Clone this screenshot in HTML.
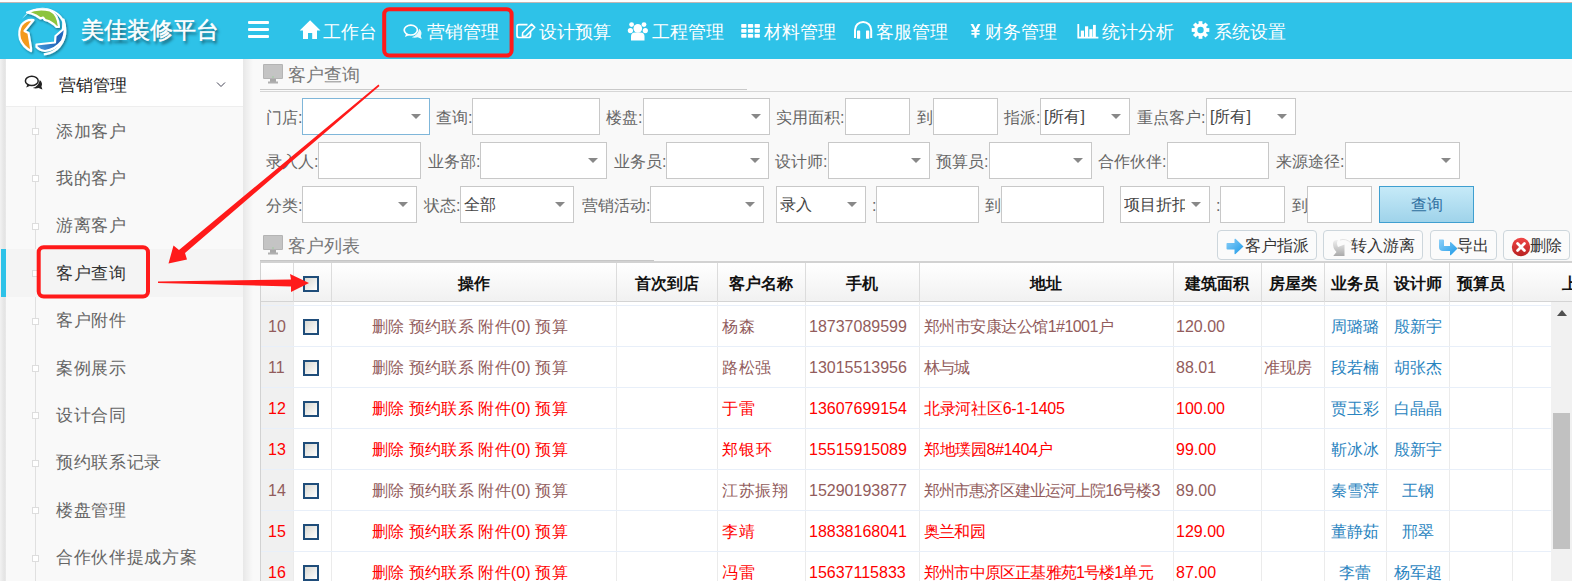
<!DOCTYPE html><html><head><meta charset="utf-8"><style>
*{box-sizing:border-box;margin:0;padding:0}
html,body{width:1572px;height:581px;overflow:hidden;background:#f9f9f9;font-family:"Liberation Sans",sans-serif;position:relative}
.abs{position:absolute}
#top{left:0;top:0;width:1572px;height:3px;background:linear-gradient(#fefefe 0,#fefefe 2px,#c2b6b4 2px)}
#hdr{left:0;top:3px;width:1572px;height:56px;background:#2ec2e8}
.nav{position:absolute;top:20.7px;color:#fff;font-size:18px;line-height:22px;white-space:nowrap}
.ni{position:absolute}
#side{left:6px;top:59px;width:237px;height:522px;background:#f9f9f9}
.si{position:absolute;left:56px;font-size:17px;letter-spacing:0.7px;color:#666;line-height:20px;white-space:nowrap}
.node{position:absolute;left:32px;width:7px;height:7px;border:1px solid #ddd;background:#fff}
#content{left:243px;top:59px;width:1329px;height:522px;background:#fafafa}
.lbl{position:absolute;font-size:16px;color:#666;line-height:20px;white-space:nowrap}
.inp{position:absolute;background:#fff;border:1px solid #c8c8c8}
.sel:after{content:"";position:absolute;right:8px;top:15px;border-left:5px solid transparent;border-right:5px solid transparent;border-top:5px solid #888}
.val{position:absolute;left:3px;top:8px;font-size:16px;color:#444;line-height:20px;white-space:nowrap}
.th{position:absolute;top:264px;height:39px;font-size:16px;font-weight:bold;color:#111;line-height:39px;text-align:center;white-space:nowrap}
.td{position:absolute;font-size:16px;line-height:20px;white-space:nowrap}
.vl{position:absolute;width:1px;background:#ebebeb}
.hl{position:absolute;height:1px;background:#e8eff9}
.cb{position:absolute;width:16px;height:16px;border:2px solid #1f4d7a;background:linear-gradient(135deg,#d8d8d2,#fff)}
.btn{position:absolute;top:230px;height:30px;border:1px solid #cdd6dc;border-radius:4px;background:#fbfbfb;font-size:16px;color:#333;line-height:29px;white-space:nowrap}
</style></head><body>
<div id="top" class="abs"></div><div id="hdr" class="abs"></div>
<svg class="abs" style="left:0;top:0" width="80" height="60" viewBox="0 0 80 60">
<defs><filter id="ls" x="-30%" y="-30%" width="160%" height="160%"><feDropShadow dx="1.2" dy="1.5" stdDeviation="1" flood-color="#000" flood-opacity=".4"/></filter>
<linearGradient id="bg1" x1="0" y1="1" x2="1" y2="0"><stop offset="0" stop-color="#4aa0e0"/><stop offset=".5" stop-color="#1f63b8"/><stop offset="1" stop-color="#2a70c8"/></linearGradient></defs>
<g filter="url(#ls)" stroke="#fff" stroke-width="2.2" stroke-linejoin="round">
<path d="M22.13 18.71 A24.6 24.6 0 0 1 63.10 18.70 A24.6 24.6 0 0 1 43.94 55.51 L43.74 53.22 A22.3 22.3 0 0 0 61.11 19.85 A22.3 22.3 0 0 0 27.89 13.19 Z" fill="#fff" stroke="none"/>
<path d="M33.5 20 Q26 19 21.5 25 Q18 31 20 39 Q23 47 31 51 L31 48 L28.5 33 L24.5 31 Z" fill="#f39a1c"/>
<path d="M27 12.5 Q38 7.5 50 10.5 Q58 14 59 27 L56.5 27 L54 24.5 L51 22.5 L48.5 21 L45 20 L43 17.5 L40.5 18.5 L36 15.5 Q31 13 27 12.5 Z" fill="#8cc43c"/>
<path d="M63.5 19.5 Q67 30 62 41 Q55 50 45 51 Q40 50.5 36.5 47 L36.5 44.5 L55 42.5 L55.5 36 L63 29.5 Z" fill="url(#bg1)"/>
</g></svg>
<div class="abs" style="left:81px;top:16px;font-size:23px;line-height:28px;color:#fff;-webkit-text-stroke:0.5px #fff;text-shadow:2px 3px 3px rgba(0,0,0,.55);white-space:nowrap">美佳装修平台</div>
<div class="abs" style="left:248px;top:21px;width:21px;height:3px;background:#fff;border-radius:1px"></div>
<div class="abs" style="left:248px;top:28px;width:21px;height:3px;background:#fff;border-radius:1px"></div>
<div class="abs" style="left:248px;top:35px;width:21px;height:3px;background:#fff;border-radius:1px"></div>
<div class="nav" style="left:323px">工作台</div>
<div class="nav" style="left:427px">营销管理</div>
<div class="nav" style="left:539px">设计预算</div>
<div class="nav" style="left:652px">工程管理</div>
<div class="nav" style="left:764px">材料管理</div>
<div class="nav" style="left:876px">客服管理</div>
<div class="nav" style="left:985px">财务管理</div>
<div class="nav" style="left:1102px">统计分析</div>
<div class="nav" style="left:1214px">系统设置</div>
<svg class="abs" style="left:0;top:0" width="1300" height="59" viewBox="0 0 1300 59"><g fill="#fff">
<path d="M310.1 20.2 L320.5 30.5 L317 30.5 L317 39 L312.2 39 L312.2 33 L308 33 L308 39 L303 39 L303 30.5 L299.7 30.5 Z"/>
<path d="M527.5 24.6 L519 24.6 Q517 24.6 517 26.6 L517 35.5 Q517 37.5 519 37.5 L528.5 37.5 Q530.5 37.5 530.5 35.5 L530.5 31.5" fill="none" stroke="#fff" stroke-width="1.7"/>
<path d="M531.5 24.2 L534.8 27.3 L526 36 L522.4 36.3 L522.7 32.8 Z" fill="none" stroke="#fff" stroke-width="1.6" stroke-linejoin="round"/>
<circle cx="637.8" cy="28.4" r="4.3"/><circle cx="631.6" cy="24.6" r="2.4"/><circle cx="644" cy="24.6" r="2.4"/>
<circle cx="630.4" cy="30.6" r="2.6"/><circle cx="645.3" cy="30.6" r="2.6"/>
<path d="M631 40.5 L631 36.5 Q631 32.5 635 32.5 L640.5 32.5 Q644.5 32.5 644.5 36.5 L644.5 40.5 Z"/>
<g><rect x="741.2" y="23.9" width="5.3" height="3.9" rx=".8"/><rect x="747.9" y="23.9" width="5.3" height="3.9" rx=".8"/><rect x="754.6" y="23.9" width="5.3" height="3.9" rx=".8"/>
<rect x="741.2" y="28.9" width="5.3" height="3.9" rx=".8"/><rect x="747.9" y="28.9" width="5.3" height="3.9" rx=".8"/><rect x="754.6" y="28.9" width="5.3" height="3.9" rx=".8"/>
<rect x="741.2" y="33.9" width="5.3" height="3.9" rx=".8"/><rect x="747.9" y="33.9" width="5.3" height="3.9" rx=".8"/><rect x="754.6" y="33.9" width="5.3" height="3.9" rx=".8"/></g>
<path d="M855 38 L855 30 A8.1 8.1 0 0 1 871.2 30 L871.2 38" fill="none" stroke="#fff" stroke-width="2"/>
<rect x="857" y="30.5" width="3.2" height="8.3" rx=".6"/><rect x="866" y="30.5" width="3.2" height="8.3" rx=".6"/>
<path d="M970.5 23.9 L973.3 23.9 L975.5 28.6 L977.7 23.9 L980.5 23.9 L977.1 30 L979.6 30 L979.6 31.8 L976.6 31.8 L976.6 33 L979.6 33 L979.6 34.8 L976.6 34.8 L976.6 37.8 L974.4 37.8 L974.4 34.8 L971.4 34.8 L971.4 33 L974.4 33 L974.4 31.8 L971.4 31.8 L971.4 30 L973.9 30 Z"/>
<path d="M1078.3 24 L1078.3 37.7 L1098.4 37.7" fill="none" stroke="#fff" stroke-width="1.8"/>
<rect x="1080.8" y="30.6" width="3.2" height="6.5"/><rect x="1085" y="26.3" width="3.2" height="10.8"/><rect x="1089.3" y="29.2" width="3.2" height="7.9"/><rect x="1093" y="24.9" width="2.8" height="12.2"/>
</g>
<g transform="translate(1200.5 30)"><g fill="#fff">
<circle r="6.4"/>
<rect x="-1.9" y="-8.8" width="3.8" height="17.6"/><rect x="-8.8" y="-1.9" width="17.6" height="3.8"/>
<rect x="-1.9" y="-8.8" width="3.8" height="17.6" transform="rotate(45)"/><rect x="-1.9" y="-8.8" width="3.8" height="17.6" transform="rotate(-45)"/>
</g><circle r="3.2" fill="#2ec2e8"/></g>
</svg>
<svg class="ni" style="left:400px;top:20px" width="26" height="22" viewBox="0 0 26 22"><ellipse cx="10.8" cy="10.1" rx="6.6" ry="4.9" fill="none" stroke="#fff" stroke-width="1.7"/><path d="M6.2 13.6 L5 17 L9.8 14.8 Z" fill="#fff"/><path d="M19.2 8.8 Q22.8 12.2 20.8 16 L21.8 19 L17.8 17.3 Q14.5 18.2 11.8 17.3 Q17.8 15.7 19.2 8.8 Z" fill="#fff" fill-opacity=".9"/></svg>
<div id="side" class="abs"></div>
<div class="abs" style="left:0;top:59px;width:6px;height:522px;background:linear-gradient(90deg,#f2f2f2,#e4e4e4 70%,#e9e9e9)"></div>
<div class="abs" style="left:6px;top:59px;width:237px;height:48px;background:#fff;border-bottom:1px solid #eee"></div>
<div class="abs" style="left:58.5px;top:75.5px;font-size:17px;letter-spacing:0.3px;line-height:20px;color:#222;white-space:nowrap">营销管理</div>
<svg class="abs" style="left:18px;top:68px" width="30" height="30" viewBox="0 0 30 30"><ellipse cx="13.8" cy="12.9" rx="6.4" ry="4.7" fill="none" stroke="#222" stroke-width="1.5"/><path d="M9.5 16.2 L8.2 19.6 L12.8 17.4 Z" fill="#222"/><path d="M21.8 12 Q25.2 15 23.4 18.6 L24.4 21.6 L20.6 20 Q17.5 20.8 14.8 20 Q20.5 18.5 21.8 12 Z" fill="#222"/></svg>
<svg class="abs" style="left:216px;top:81px" width="11" height="8" viewBox="0 0 11 8"><path d="M1 1.5 L5 5.5 L9 1.5" fill="none" stroke="#445" stroke-width="1"/></svg>
<div class="abs" style="left:35px;top:106px;width:1px;height:475px;background:#e0e0e0"></div>
<div class="abs" style="left:6px;top:249px;width:237px;height:48px;background:#f4f4f4"></div>
<div class="abs" style="left:1px;top:249px;width:5px;height:48px;background:#2ec2e8"></div>
<div class="si" style="top:121.5px;color:#666">添加客户</div>
<div class="node" style="top:128.0px"></div>
<div class="si" style="top:168.9px;color:#666">我的客户</div>
<div class="node" style="top:175.4px"></div>
<div class="si" style="top:216.3px;color:#666">游离客户</div>
<div class="node" style="top:222.8px"></div>
<div class="si" style="top:263.7px;color:#333">客户查询</div>
<div class="node" style="top:270.2px"></div>
<div class="si" style="top:311.1px;color:#666">客户附件</div>
<div class="node" style="top:317.6px"></div>
<div class="si" style="top:358.5px;color:#666">案例展示</div>
<div class="node" style="top:365.0px"></div>
<div class="si" style="top:405.9px;color:#666">设计合同</div>
<div class="node" style="top:412.4px"></div>
<div class="si" style="top:453.3px;color:#666">预约联系记录</div>
<div class="node" style="top:459.8px"></div>
<div class="si" style="top:500.7px;color:#666">楼盘管理</div>
<div class="node" style="top:507.2px"></div>
<div class="si" style="top:548.1px;color:#666">合作伙伴提成方案</div>
<div class="node" style="top:554.6px"></div>
<div class="abs" style="left:243px;top:59px;width:10px;height:522px;background:linear-gradient(90deg,rgba(0,0,0,.07),rgba(0,0,0,0))"></div>
<svg class="abs" style="left:263px;top:64px" width="20" height="20" viewBox="0 0 20 20"><rect x="0" y="0" width="20" height="15" rx="1" fill="#b4b4b4"/><rect x="1" y="1" width="18" height="13" fill="#c4c4c4"/><rect x="7" y="15" width="6" height="3" fill="#a8a8a8"/><rect x="5" y="17.5" width="10" height="2" fill="#b0b0b0"/><circle cx="10" cy="13" r=".8" fill="#9c9"/></svg>
<div class="abs" style="left:288px;top:64px;font-size:18px;line-height:22px;color:#777;white-space:nowrap">客户查询</div>
<div class="abs" style="left:260px;top:89px;width:487px;height:1px;background:#c9c9c9"></div>
<div class="abs" style="left:260px;top:91px;width:1312px;height:1px;background:#d6d6d6"></div>
<div class="lbl" style="left:266px;top:108px">门店:</div>
<div class="inp sel" style="left:302px;top:98px;width:128px;height:37px;border-color:#7fb6d9"></div>
<div class="lbl" style="left:436px;top:108px">查询:</div>
<div class="inp" style="left:472px;top:98px;width:128px;height:37px"></div>
<div class="lbl" style="left:606px;top:108px">楼盘:</div>
<div class="inp sel" style="left:643px;top:98px;width:127px;height:37px"></div>
<div class="lbl" style="left:776px;top:108px">实用面积:</div>
<div class="inp" style="left:845px;top:98px;width:65px;height:37px"></div>
<div class="lbl" style="left:917px;top:108px">到</div>
<div class="inp" style="left:933px;top:98px;width:65px;height:37px"></div>
<div class="lbl" style="left:1004px;top:108px">指派:</div>
<div class="inp sel" style="left:1040px;top:98px;width:90px;height:37px"><div class="val">[所有]</div></div>
<div class="lbl" style="left:1137px;top:108px">重点客户:</div>
<div class="inp sel" style="left:1206px;top:98px;width:90px;height:37px"><div class="val">[所有]</div></div>
<div class="lbl" style="left:266px;top:152px">录入人:</div>
<div class="inp" style="left:318px;top:142px;width:103px;height:37px"></div>
<div class="lbl" style="left:428px;top:152px">业务部:</div>
<div class="inp sel" style="left:480px;top:142px;width:127px;height:37px"></div>
<div class="lbl" style="left:614px;top:152px">业务员:</div>
<div class="inp sel" style="left:666px;top:142px;width:103px;height:37px"></div>
<div class="lbl" style="left:775px;top:152px">设计师:</div>
<div class="inp sel" style="left:828px;top:142px;width:102px;height:37px"></div>
<div class="lbl" style="left:936px;top:152px">预算员:</div>
<div class="inp sel" style="left:989px;top:142px;width:103px;height:37px"></div>
<div class="lbl" style="left:1098px;top:152px">合作伙伴:</div>
<div class="inp" style="left:1167px;top:142px;width:102px;height:37px"></div>
<div class="lbl" style="left:1276px;top:152px">来源途径:</div>
<div class="inp sel" style="left:1345px;top:142px;width:115px;height:37px"></div>
<div class="lbl" style="left:266px;top:195.5px">分类:</div>
<div class="inp sel" style="left:302px;top:186px;width:115px;height:37px"></div>
<div class="lbl" style="left:424px;top:195.5px">状态:</div>
<div class="inp sel" style="left:460px;top:186px;width:114px;height:37px"><div class="val">全部</div></div>
<div class="lbl" style="left:582px;top:195.5px">营销活动:</div>
<div class="inp sel" style="left:650px;top:186px;width:114px;height:37px"></div>
<div class="inp sel" style="left:776px;top:186px;width:90px;height:37px"><div class="val">录入</div></div>
<div class="lbl" style="left:872px;top:195.5px">:</div>
<div class="inp" style="left:876px;top:186px;width:103px;height:37px"></div>
<div class="lbl" style="left:985px;top:195.5px">到</div>
<div class="inp" style="left:1001px;top:186px;width:103px;height:37px"></div>
<div class="inp sel" style="left:1120px;top:186px;width:90px;height:37px"><div class="val"><span style="display:inline-block;width:61px;overflow:hidden;vertical-align:top">项目折扣</span></div></div>
<div class="lbl" style="left:1216px;top:195.5px">:</div>
<div class="inp" style="left:1220px;top:186px;width:65px;height:37px"></div>
<div class="lbl" style="left:1292px;top:195.5px">到</div>
<div class="inp" style="left:1307px;top:186px;width:65px;height:37px"></div>
<div class="abs" style="left:1379px;top:186px;width:95px;height:37px;border:1px solid #3f9fd0;background:linear-gradient(#c6eaf8,#9fd3ea);font-size:16px;line-height:35px;text-align:center;color:#2f6f9f">查询</div>
<svg class="abs" style="left:263px;top:235px" width="20" height="20" viewBox="0 0 20 20"><rect x="0" y="0" width="20" height="15" rx="1" fill="#b4b4b4"/><rect x="1" y="1" width="18" height="13" fill="#c4c4c4"/><rect x="7" y="15" width="6" height="3" fill="#a8a8a8"/><rect x="5" y="17.5" width="10" height="2" fill="#b0b0b0"/><circle cx="10" cy="13" r=".8" fill="#9c9"/></svg>
<div class="abs" style="left:288px;top:235px;font-size:18px;line-height:22px;color:#777;white-space:nowrap">客户列表</div>
<div class="btn" style="left:1217px;width:100px"><svg style="position:absolute;left:8px;top:7px" width="18" height="17" viewBox="0 0 18 17"><defs><linearGradient id="ab" x1="0" y1="0" x2="1" y2="1"><stop offset="0" stop-color="#8fd0f8"/><stop offset="1" stop-color="#1b9ae8"/></linearGradient></defs><path d="M1 5 Q0.5 5 0.5 6 L0.5 10.5 Q0.5 11.5 1.5 11.5 L8.5 11.5 L8.5 15.5 Q8.5 16.5 9.5 16 L17.5 8.5 L9.5 0.8 Q8.5 0.3 8.5 1.3 L8.5 5 Z" fill="url(#ab)"/></svg><span style="position:absolute;left:26.5px;top:0">客户指派</span></div>
<div class="btn" style="left:1323px;width:100px"><svg style="position:absolute;left:7px;top:6px" width="22" height="20" viewBox="0 0 22 20"><defs><linearGradient id="gg" x1="0" y1="0" x2="0" y2="1"><stop offset="0" stop-color="#f0f0f0"/><stop offset="1" stop-color="#aaa"/></linearGradient></defs><path d="M9 3 Q15 1 20 6" fill="none" stroke="#e4e4e4" stroke-width="1"/><path d="M2 6 Q2.5 2.5 7 3 Q5 6 7 10 L13.5 7.5 L13.5 19 L2.2 19 L5.5 15 Q1.5 11 2 6 Z" fill="url(#gg)"/></svg><span style="position:absolute;left:27px;top:0">转入游离</span></div>
<div class="btn" style="left:1430px;width:67px"><svg style="position:absolute;left:7px;top:8px" width="20" height="17" viewBox="0 0 20 17"><defs><linearGradient id="ab2" x1="0" y1="0" x2="1" y2="1"><stop offset="0" stop-color="#8fd0f8"/><stop offset="1" stop-color="#1b9ae8"/></linearGradient></defs><path d="M1 0.5 L5 0.5 Q6 0.5 6 1.5 L6 7 L12 7 L12 3.5 Q12 2.5 13 3.2 L19.5 9.5 L13 16 Q12 16.7 12 15.7 L12 12 L5 12 Q1 12 1 8 Z" fill="url(#ab2)"/></svg><span style="position:absolute;left:26px;top:0">导出</span></div>
<div class="btn" style="left:1503px;width:67px"><svg style="position:absolute;left:7px;top:6px" width="20" height="20" viewBox="0 0 20 20"><defs><linearGradient id="rg" x1="0" y1="0" x2="0" y2="1"><stop offset="0" stop-color="#f04646"/><stop offset="1" stop-color="#b82222"/></linearGradient></defs><circle cx="10" cy="10" r="9.2" fill="url(#rg)"/><path d="M6.6 6.6 L13.4 13.4 M13.4 6.6 L6.6 13.4" stroke="#fff" stroke-width="2.8" stroke-linecap="round"/></svg><span style="position:absolute;left:26px;top:0">删除</span></div>
<div class="abs" style="left:260px;top:261px;width:1312px;height:2px;background:#d2d2d2"></div>
<div class="abs" style="left:260px;top:260px;width:394px;height:1px;background:#c6c6c6"></div>
<div class="abs" style="left:260px;top:263px;width:1312px;height:39px;background:linear-gradient(#ffffff,#f1f1f1);border-bottom:1px solid #d4d4d4"></div>
<div class="abs" style="left:260px;top:302px;width:1291px;height:279px;background:#fff"></div>
<div class="abs" style="left:261px;top:302px;width:32px;height:279px;background:#f0f0f0"></div>
<div class="abs" style="left:260px;top:263px;width:1px;height:318px;background:#d2d2d2"></div>
<div class="abs" style="left:293px;top:263px;width:1px;height:39px;background:#dcdcdc"></div>
<div class="vl" style="left:293px;top:302px;height:279px"></div>
<div class="abs" style="left:331px;top:263px;width:1px;height:39px;background:#dcdcdc"></div>
<div class="vl" style="left:331px;top:302px;height:279px"></div>
<div class="abs" style="left:616px;top:263px;width:1px;height:39px;background:#dcdcdc"></div>
<div class="vl" style="left:616px;top:302px;height:279px"></div>
<div class="abs" style="left:717px;top:263px;width:1px;height:39px;background:#dcdcdc"></div>
<div class="vl" style="left:717px;top:302px;height:279px"></div>
<div class="abs" style="left:805px;top:263px;width:1px;height:39px;background:#dcdcdc"></div>
<div class="vl" style="left:805px;top:302px;height:279px"></div>
<div class="abs" style="left:919px;top:263px;width:1px;height:39px;background:#dcdcdc"></div>
<div class="vl" style="left:919px;top:302px;height:279px"></div>
<div class="abs" style="left:1173px;top:263px;width:1px;height:39px;background:#dcdcdc"></div>
<div class="vl" style="left:1173px;top:302px;height:279px"></div>
<div class="abs" style="left:1261px;top:263px;width:1px;height:39px;background:#dcdcdc"></div>
<div class="vl" style="left:1261px;top:302px;height:279px"></div>
<div class="abs" style="left:1324px;top:263px;width:1px;height:39px;background:#dcdcdc"></div>
<div class="vl" style="left:1324px;top:302px;height:279px"></div>
<div class="abs" style="left:1386px;top:263px;width:1px;height:39px;background:#dcdcdc"></div>
<div class="vl" style="left:1386px;top:302px;height:279px"></div>
<div class="abs" style="left:1449px;top:263px;width:1px;height:39px;background:#dcdcdc"></div>
<div class="vl" style="left:1449px;top:302px;height:279px"></div>
<div class="abs" style="left:1512px;top:263px;width:1px;height:39px;background:#dcdcdc"></div>
<div class="vl" style="left:1512px;top:302px;height:279px"></div>
<div class="th" style="left:331px;width:286px">操作</div>
<div class="th" style="left:617px;width:100px">首次到店</div>
<div class="th" style="left:717px;width:88px">客户名称</div>
<div class="th" style="left:805px;width:114px">手机</div>
<div class="th" style="left:919px;width:254px">地址</div>
<div class="th" style="left:1173px;width:88px">建筑面积</div>
<div class="th" style="left:1261px;width:63px">房屋类</div>
<div class="th" style="left:1324px;width:62px">业务员</div>
<div class="th" style="left:1386px;width:63px">设计师</div>
<div class="th" style="left:1449px;width:63px">预算员</div>
<div class="th" style="left:1562px;width:20px;text-align:left">上</div>
<div class="cb" style="left:303px;top:276px"></div>
<div class="hl" style="left:261px;top:305px;width:1290px"></div>
<div class="td" style="left:268px;top:317px;color:#925c5c">10</div>
<div class="cb" style="left:303px;top:319px"></div>
<div class="td" style="left:372px;letter-spacing:0.18px;top:317px;color:#925c5c">删除 预约联系 附件(0) 预算</div>
<div class="td" style="left:722px;letter-spacing:1.0px;top:317px;color:#925c5c">杨森</div>
<div class="td" style="left:809px;top:317px;color:#925c5c">18737089599</div>
<div class="td" style="left:924px;letter-spacing:-0.54px;top:317px;color:#925c5c">郑州市安康达公馆1#1001户</div>
<div class="td" style="left:1176px;top:317px;color:#925c5c">120.00</div>
<div class="td" style="left:1264px;top:317px;color:#925c5c"></div>
<div class="td" style="left:1324px;width:62px;text-align:center;top:317px;color:#2a84c0">周璐璐</div>
<div class="td" style="left:1386px;width:63px;text-align:center;top:317px;color:#2a84c0">殷新宇</div>
<div class="hl" style="left:261px;top:346px;width:1290px"></div>
<div class="td" style="left:268px;top:358px;color:#925c5c">11</div>
<div class="cb" style="left:303px;top:360px"></div>
<div class="td" style="left:372px;letter-spacing:0.18px;top:358px;color:#925c5c">删除 预约联系 附件(0) 预算</div>
<div class="td" style="left:722px;letter-spacing:0.5px;top:358px;color:#925c5c">路松强</div>
<div class="td" style="left:809px;top:358px;color:#925c5c">13015513956</div>
<div class="td" style="left:924px;letter-spacing:-0.8px;top:358px;color:#925c5c">林与城</div>
<div class="td" style="left:1176px;top:358px;color:#925c5c">88.01</div>
<div class="td" style="left:1264px;top:358px;color:#925c5c">准现房</div>
<div class="td" style="left:1324px;width:62px;text-align:center;top:358px;color:#2a84c0">段若楠</div>
<div class="td" style="left:1386px;width:63px;text-align:center;top:358px;color:#2a84c0">胡张杰</div>
<div class="hl" style="left:261px;top:387px;width:1290px"></div>
<div class="td" style="left:268px;top:399px;color:#ff0000">12</div>
<div class="cb" style="left:303px;top:401px"></div>
<div class="td" style="left:372px;letter-spacing:0.18px;top:399px;color:#ff0000">删除 预约联系 附件(0) 预算</div>
<div class="td" style="left:722px;letter-spacing:1.0px;top:399px;color:#ff0000">于雷</div>
<div class="td" style="left:809px;top:399px;color:#ff0000">13607699154</div>
<div class="td" style="left:924px;letter-spacing:-0.27px;top:399px;color:#ff0000">北录河社区6-1-1405</div>
<div class="td" style="left:1176px;top:399px;color:#ff0000">100.00</div>
<div class="td" style="left:1264px;top:399px;color:#ff0000"></div>
<div class="td" style="left:1324px;width:62px;text-align:center;top:399px;color:#2a84c0">贾玉彩</div>
<div class="td" style="left:1386px;width:63px;text-align:center;top:399px;color:#2a84c0">白晶晶</div>
<div class="hl" style="left:261px;top:428px;width:1290px"></div>
<div class="td" style="left:268px;top:440px;color:#ff0000">13</div>
<div class="cb" style="left:303px;top:442px"></div>
<div class="td" style="left:372px;letter-spacing:0.18px;top:440px;color:#ff0000">删除 预约联系 附件(0) 预算</div>
<div class="td" style="left:722px;letter-spacing:0.8px;top:440px;color:#ff0000">郑银环</div>
<div class="td" style="left:809px;top:440px;color:#ff0000">15515915089</div>
<div class="td" style="left:924px;letter-spacing:-0.39px;top:440px;color:#ff0000">郑地璞园8#1404户</div>
<div class="td" style="left:1176px;top:440px;color:#ff0000">99.00</div>
<div class="td" style="left:1264px;top:440px;color:#ff0000"></div>
<div class="td" style="left:1324px;width:62px;text-align:center;top:440px;color:#2a84c0">靳冰冰</div>
<div class="td" style="left:1386px;width:63px;text-align:center;top:440px;color:#2a84c0">殷新宇</div>
<div class="hl" style="left:261px;top:469px;width:1290px"></div>
<div class="td" style="left:268px;top:481px;color:#925c5c">14</div>
<div class="cb" style="left:303px;top:483px"></div>
<div class="td" style="left:372px;letter-spacing:0.18px;top:481px;color:#925c5c">删除 预约联系 附件(0) 预算</div>
<div class="td" style="left:722px;letter-spacing:0.6px;top:481px;color:#925c5c">江苏振翔</div>
<div class="td" style="left:809px;top:481px;color:#925c5c">15290193877</div>
<div class="td" style="left:924px;letter-spacing:-0.89px;top:481px;color:#925c5c">郑州市惠济区建业运河上院16号楼3</div>
<div class="td" style="left:1176px;top:481px;color:#925c5c">89.00</div>
<div class="td" style="left:1264px;top:481px;color:#925c5c"></div>
<div class="td" style="left:1324px;width:62px;text-align:center;top:481px;color:#2a84c0">秦雪萍</div>
<div class="td" style="left:1386px;width:63px;text-align:center;top:481px;color:#2a84c0">王钢</div>
<div class="hl" style="left:261px;top:510px;width:1290px"></div>
<div class="td" style="left:268px;top:522px;color:#ff0000">15</div>
<div class="cb" style="left:303px;top:524px"></div>
<div class="td" style="left:372px;letter-spacing:0.18px;top:522px;color:#ff0000">删除 预约联系 附件(0) 预算</div>
<div class="td" style="left:722px;letter-spacing:1.0px;top:522px;color:#ff0000">李靖</div>
<div class="td" style="left:809px;top:522px;color:#ff0000">18838168041</div>
<div class="td" style="left:924px;letter-spacing:-0.83px;top:522px;color:#ff0000">奥兰和园</div>
<div class="td" style="left:1176px;top:522px;color:#ff0000">129.00</div>
<div class="td" style="left:1264px;top:522px;color:#ff0000"></div>
<div class="td" style="left:1324px;width:62px;text-align:center;top:522px;color:#2a84c0">董静茹</div>
<div class="td" style="left:1386px;width:63px;text-align:center;top:522px;color:#2a84c0">邢翠</div>
<div class="hl" style="left:261px;top:551px;width:1290px"></div>
<div class="td" style="left:268px;top:563px;color:#ff0000">16</div>
<div class="cb" style="left:303px;top:565px"></div>
<div class="td" style="left:372px;letter-spacing:0.18px;top:563px;color:#ff0000">删除 预约联系 附件(0) 预算</div>
<div class="td" style="left:722px;letter-spacing:1.0px;top:563px;color:#ff0000">冯雷</div>
<div class="td" style="left:809px;top:563px;color:#ff0000">15637115833</div>
<div class="td" style="left:924px;letter-spacing:-0.81px;top:563px;color:#ff0000">郑州市中原区正基雅苑1号楼1单元</div>
<div class="td" style="left:1176px;top:563px;color:#ff0000">87.00</div>
<div class="td" style="left:1264px;top:563px;color:#ff0000"></div>
<div class="td" style="left:1324px;width:62px;text-align:center;top:563px;color:#2a84c0">李蕾</div>
<div class="td" style="left:1386px;width:63px;text-align:center;top:563px;color:#2a84c0">杨军超</div>
<div class="abs" style="left:1551px;top:302px;width:21px;height:279px;background:#f1f1f1"></div>
<div class="abs" style="left:1557px;top:310px;width:0;height:0;border-left:5px solid transparent;border-right:5px solid transparent;border-bottom:6px solid #505050"></div>
<div class="abs" style="left:1553px;top:413px;width:17px;height:136px;background:#c1c1c1"></div>
<svg class="abs" style="left:0;top:0" width="1572" height="581" viewBox="0 0 1572 581">
<rect x="384.2" y="9.2" width="127.4" height="46.4" rx="5" fill="none" stroke="#ff1a1a" stroke-width="4"/>
<rect x="38.7" y="247.2" width="109.3" height="49.4" rx="5" fill="none" stroke="#ff1a1a" stroke-width="4"/>
<path d="M378.5 84.5 L379.5 86 L185 253 L187 259.5 L168.5 263.5 L173.5 245.5 L179 250 Z" fill="#ff1a1a"/>
<path d="M158 281.5 L291 279.5 L290 274 L309 283 L291 292 L291 286.5 L158 283 Z" fill="#ff1a1a"/>
</svg>
</body></html>
